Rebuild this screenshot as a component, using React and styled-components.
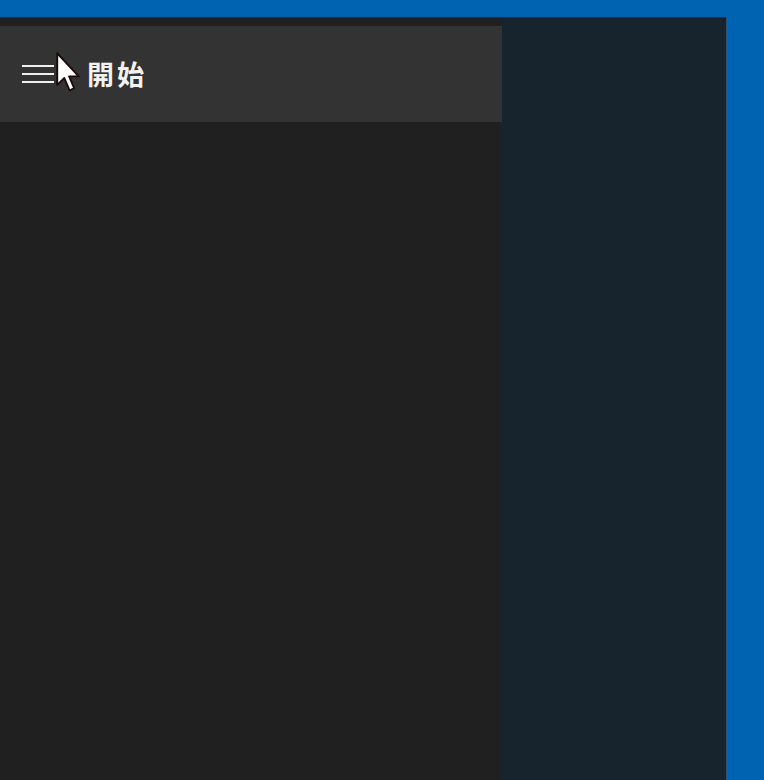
import React from 'react';
import styled, { createGlobalStyle } from 'styled-components';

const Global = createGlobalStyle`
	html, body {
		margin: 0;
		padding: 0;
		background: #0063b1;
		overflow: hidden;
	}
	#root {
		height: 780px;
	}
`;

export default function App() {
	return (
		<>
			<Global />
			<Screen>
				<Window>
					<Pane>
						<Header>
							<Hamburger>
								<span />
								<span />
								<span />
							</Hamburger>
							<Title>開始</Title>
							<Cursor />
						</Header>
					</Pane>
					<Side />
				</Window>
			</Screen>
		</>
	);
}

/* ELEMENTS */
function Cursor() {
	return (
		<StyledCursor width="25" height="40" viewBox="0 0 12 19.2">
			<path
				d="M0.6 0.6 L0.6 15.8 L4 12.5 L6.5 18.4 L8.7 17.4 L6.3 11.7 L10.9 11.7 Z"
				fill="#fff"
				stroke="#1a0a0a"
				strokeWidth="0.9"
				strokeLinejoin="round"
			/>
		</StyledCursor>
	);
}
/* END ELEMENTS */

/* STYLES */
const Screen = styled.div`
	height: 780px;
	padding-top: 17px;
	box-sizing: border-box;
`;

const Window = styled.div`
	width: 727px;
	height: 100%;
	display: flex;
	box-sizing: border-box;
	border-right: 1px solid #34506b;
	border-top: 1px solid #22303d;
	box-shadow: 1px 0 1px rgba(60, 90, 120, 0.5);
`;

const Pane = styled.div`
	width: 502px;
	background: #202020;
	padding-top: 8px;
`;

const Header = styled.div`
	position: relative;
	height: 96px;
	background: #333333;
	display: flex;
	align-items: center;
	padding-left: 22px;
	gap: 33px;
`;

const Hamburger = styled.div`
	width: 32px;
	display: flex;
	flex-direction: column;
	gap: 6px;

	span {
		display: block;
		height: 2px;
		background: #f0f0f0;
	}
`;

const Title = styled.span`
	font-family: 'Noto Sans CJK JP', 'Noto Sans', sans-serif;
	font-size: 27px;
	font-weight: 700;
	color: #f2f2f2;
	letter-spacing: 3px;
	line-height: 1;
	margin-top: -2px;
`;

const StyledCursor = styled.svg`
	position: absolute;
	left: 56px;
	top: 26px;
`;

const Side = styled.div`
	flex: 1;
	background: #17232d;
`;
/* END STYLES */
